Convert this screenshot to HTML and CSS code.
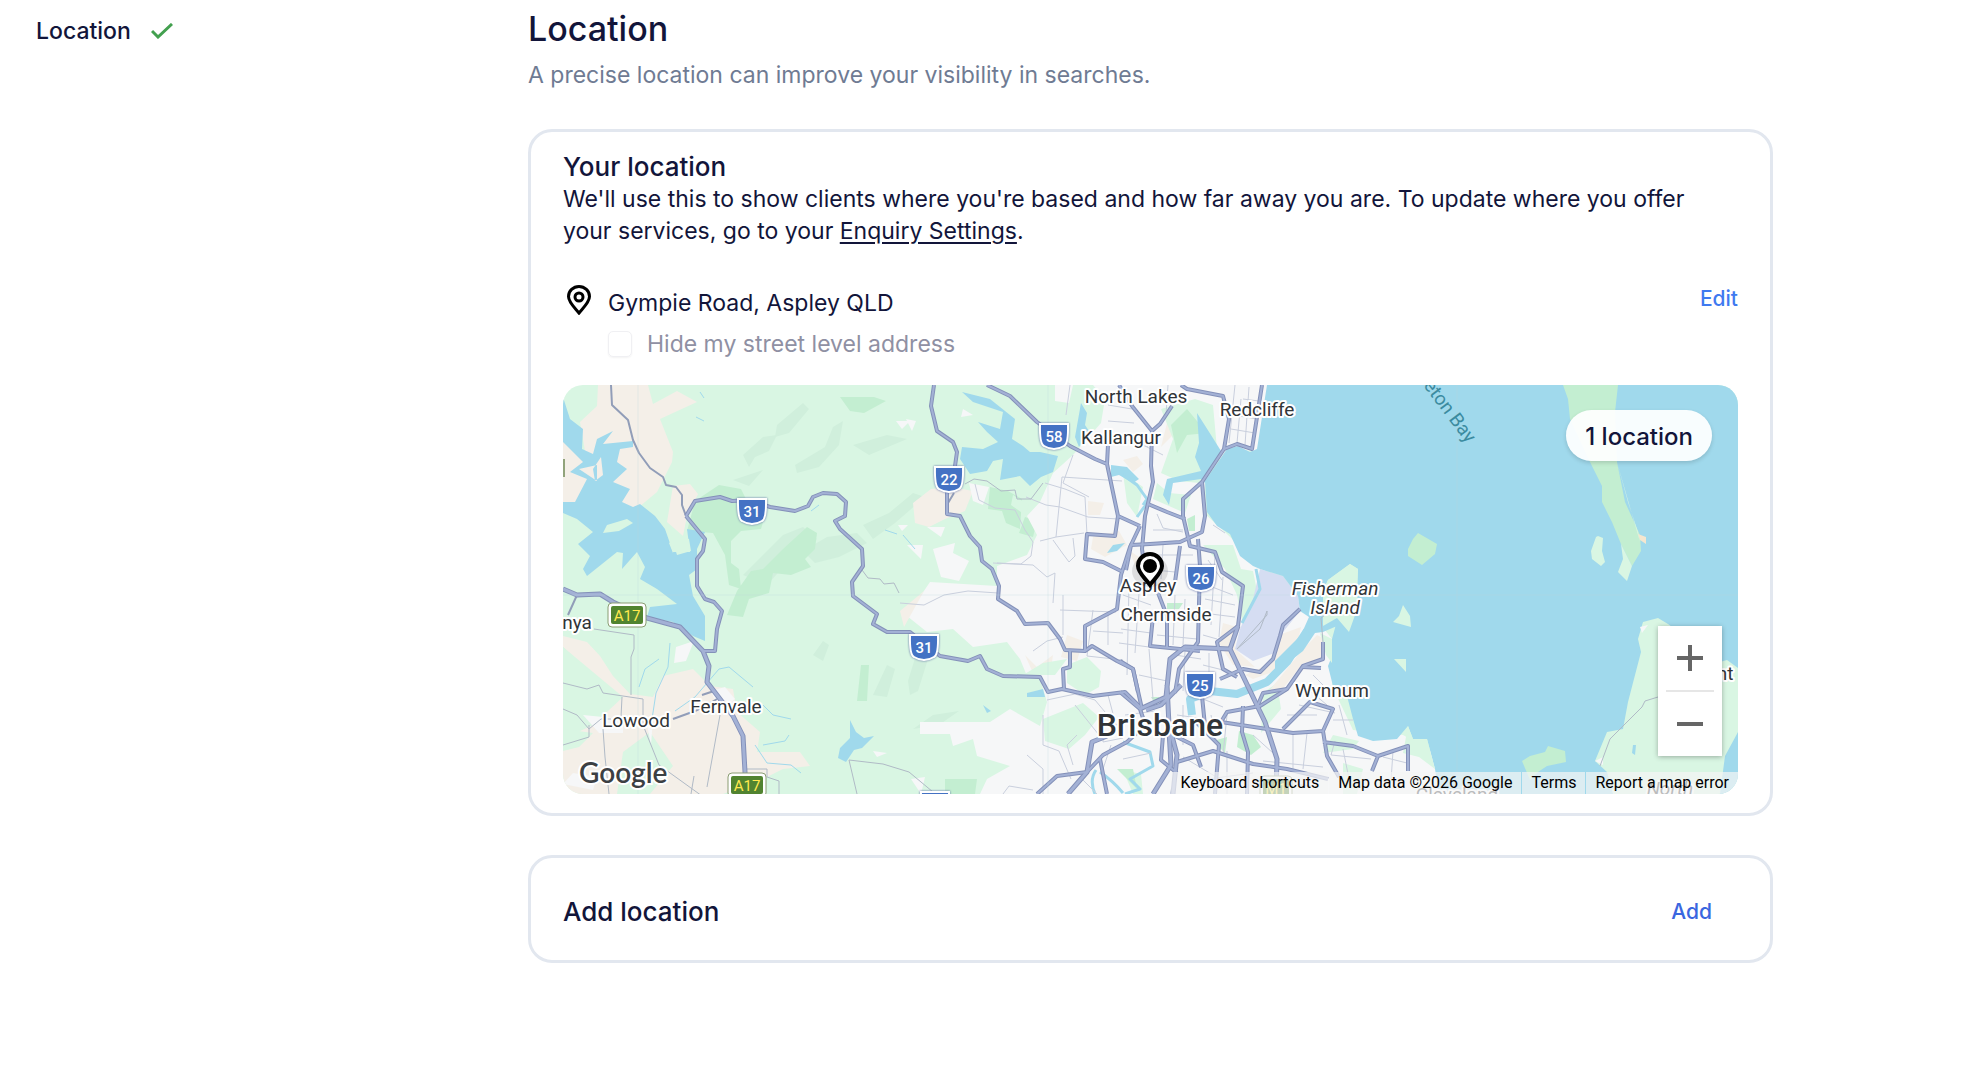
FILE: index.html
```html
<!DOCTYPE html>
<html lang="en">
<head>
    <meta charset="UTF-8">
    <meta name="viewport" content="width=device-width, initial-scale=1.0">
    <title>Location</title>
    <link rel="stylesheet" href="styles.css">
</head>
<body>
    <div class="page">
        <nav class="sidebar">
            <a href="#location" class="step">Location
                <svg class="check" viewBox="0 0 22 16" aria-hidden="true"><path d="M1 8l6 6L21 1"/></svg>
            </a>
        </nav>

        <main class="content" id="location">
            <h1>Location</h1>
            <p class="intro">A precise location can improve your visibility in searches.</p>

            <section class="card">
                <h2>Your location</h2>
                <p class="description">We'll use this to show clients where you're based and how far away you are. To update where you offer your services, go to your <a href="#enquiry">Enquiry Settings</a>.</p>

                <div class="address">
                    <svg class="pin" viewBox="0 0 24 30" aria-hidden="true">
                        <path d="M12 28C9 24 1.500 17.500 1.500 11.500a10.500 10 0 0 1 21 0C22.500 17.500 15 24 12 28z"/>
                        <circle cx="12" cy="12" r="4"/>
                    </svg>
                    <div class="address-text">
                        <p>Gympie Road, Aspley QLD</p>
                        <div class="hide-address">
                            <input type="checkbox" id="hide" disabled>
                            <label for="hide">Hide my street level address</label>
                        </div>
                    </div>
                    <button class="link-button" type="button">Edit</button>
                </div>

                <div class="map">
                    <svg class="map-canvas" viewBox="0 0 1175 409" preserveAspectRatio="xMidYMid slice">
                        <defs>
                            <g id="highways">
                                <path d="M123 131L132 116 157 112 169 116 187 115 207 122 232 126 245 121 250 112 260 108 274 109 283 117 282 131 272 136 277 144 299 164 300 181 289 197 290 211 314 229 310 239 324 247 347 247 377 271 405 276 417 271 424 284 440 291 477 292 485 307 499 304 530 311 562 307 577 322"/>
                                <path d="M123 131L142 154 140 166 134 174 134 201 142 214 151 217 159 226 154 244 152 266 140 266"/>
                                <path d="M371 0L368 21 374 46 390 57 394 67 392 81 384 107 384 129 397 131 407 151 417 162 419 176 429 184 436 201 435 214 454 226 462 239 485 238 497 254 502 265 522 266 529 261 554 276 570 284 575 307"/>
                                <path d="M424 0L447 11 474 37 507 61 532 74 544 79 555 131 577 141M555 131L552 151 524 149 522 174 540 177 560 187M544 79L545 60"/>
                                <path d="M556 0L569 21 589 46 588 81 590 97 582 131 579 164 584 201M609 21L597 39 589 46"/>
                                <path d="M585 119L604 127 622 134M639 97L642 131 639 147 617 157 587 159 568 160 563 185"/>
                                <path d="M618 0L624 4 660 11 666 34 661 64 639 97 620 114 620 131 627 161 652 167 659 187 680 201 675 241 654 257 660 284 674 292"/>
                                <path d="M699 0L689 64 674 59 661 64M635 154L637 181 635 257 616 284 612 308M617 161L612 197"/>
                                <path d="M507 266L507 282 500 284 501 304M522 266L522 241 554 224 558 190 567 162 577 141"/>
                                <path d="M590 231L587 261 637 266M592 200L604 231 604 262"/>
                                <path d="M737 224L720 240 717 251 710 274 697 287 680 284 657 294"/>
                                <path d="M760 257L760 274 740 281 724 304 697 321 664 327 658 337 704 344 730 348 760 346 770 324 747 317 720 344"/>
                                <path d="M760 346L764 371 776 392M760 357L790 361 815 371 845 361 845 386M815 371L809 386"/>
                                <path d="M680 321L679 347 685 367 684 409M614 377L650 366 690 379 724 384 765 394M639 311L642 341"/>
                                <path d="M557 276L570 284 579 324M557 307L577 324 584 345M474 409L494 391 524 387 540 370 564 357 577 345M537 374L544 409M630 334L656 360 652 409"/>
                                <path d="M610 350L630 360 638 382M600 350L598 375 614 388M694 322L700 308 724 304M740 282L758 283"/>
                            </g>
                            <g id="motorways">
                                <path d="M0 204L14 210 37 209 50 217 84 233 117 242 140 266 146 281 144 297 157 314 170 331 180 351 182 387 182 409"/>
                                <path d="M675 241L667 264 622 262 607 274 603 312 577 324M604 300L606 340 614 370 610 409M667 264L702 337 714 374 713 409"/>
                                <path d="M505 409L524 387 529 357 544 351M583 325L598 320 618 300M606 345L608 380 590 409"/>
                            </g>
                            <path id="shield" d="M-14-12H14Q14.500 8 10 10 5 13 0 13T-10 10Q-14.500 8-14-12z"/>
                        </defs>

                        <rect class="park" width="1175" height="409"/>

                        <!-- relief and forest -->
                        <path class="relief" d="M180 70l20-18 14-2-8 16-14 6-6 10zM214 40l26-22 6 6-20 24-14 4zM232 80l30-18 8-20 10-6-4 24-20 22-22 6zM170 95l30-10-14 16zM300 140l26-12 24-20 12 4-30 26-22 16zM290 60l34-10 20 4-38 16zM310 310l14-30 8 4-8 28zM345 296l8-26 12 4-10 32-8 4zM240 166l24-14 30-4 10 10-28 14-24 6z"/>
                        <path class="relief" d="M250 270l10-14 6 4-6 16zM180 190l40-40 20-8 14 12-30 24-20 22zM350 344l20-14 26-4-20 14z"/>
                        <path class="forest" d="M132 116l24-16 22 4 8 16 18 4-6 20-20 2-10 10 0 22 8 6 2 20-12-4-4-30-12-22-26-2zM200 184l20-20 24-22 10 6-2 16-10 10 6 8-20 8-18-2-4 20-20 6-6 18-16-2 10-24 14-20zM277 12l34 0 12 4-22 12-14-2zM427 102l18 4 14 8-2 30-14-6-4-12-14-2zM462 132l12 4-4 16-14-4zM427 214l24-2 6-12 6 14-2 14 26 14-4 6-20-4-8 14-6-2 2-14-10-16-14-6zM497 196l20-4-4 16 30 8 0 12-50-6zM497 196l-6 14 14 8zM382 394l32 0-2 15-30 0zM298 280l8 0-2 36-10 0zM500 352l22-4 0 14-20 6z"/>
                        <path class="sand" d="M35 0L34 21 17 37 22 66 0 56 0 118 12 117 70 127 94 107 109 77 110 67 97 34 134 17 114 6 90 19 85 0zM110 101L127 99 135 109 124 131 120 151 104 137zM350 118l18-14 20-2 22 4-8 20-20 8-16 8-14-4z"/>
                        <path class="sand" d="M0 251L24 257 37 271 50 291 67 309 90 312 100 291 130 284 147 301 170 304 174 327 197 347 194 367 237 367 247 381 220 384 200 394 160 409 0 409 0 354 30 340 60 312 0 262z"/>
                        <path class="park" d="M0 262l26 24 14 22-40 10zM60 367L87 347 110 381 87 409 54 409zM0 344l30 4-14 14-16 4z"/>
                        <path class="urban" d="M113 262l18-6-8 20-12 2zM148 306l14-4 10 12-16 12zM20 330l40 4 0 14-24 0zM10 388l24 4-4 13-30-6zM84 340l6-6-2 26z"/>

                        <!-- built-up area -->
                        <path class="urban" d="M530 0L542 14 538 38 510 70 490 88 477 117 464 131 474 150 464 170 434 181 434 201 367 197 344 231 364 247 390 244 410 262 444 257 457 274 464 291 477 294 484 317 477 341 447 324 427 337 357 337 357 349 387 349 390 361 410 354 414 371 447 381 424 394 417 409 880 409 870 367 840 350 790 345 769 301 769 254 735 211 700 184 664 149 640 127 642 96 664 64 704 67 704 0z"/>
                        <path class="urban" d="M406 98l20 4-6 18-10-4zM343 34l10 2-4 10zM400 24l10 6-12 2zM333 36l14 0-8 8zM370 164l22-6-2 10 16 8-10 20-18-4zM344 160l16 0-2 14zM364 142l18 0-4 10zM310 366l14 2-10 4zM492 0l18 0-4 18-14-2zM348 394l14-2-4 17zM335 140l10 0-6 6z"/>
                        <path class="sand" d="M560 75l14-4 6 8-10 8zM530 152l26-6 8 14-22 12-14-8zM504 250l16 6-6 20-16-4zM462 270l12 12 16-12-2 14-18 4zM566 165l14 10-6 10zM525 116l16 2-4 12-12 0zM606 30l18-12-6 24-20 20zM337 226l24-20-20 36z"/>
                        <path class="park" d="M598 24l34-10 18 6 4 44 4 16-22 18-20-2-18-8 12-34zM594 98l12 10 22 2-6 18-32-14zM504 280l20-8 14 14-2 16-14 8-18-12zM480 334l40-16 16 14-14 18-16 14-24-8zM640 160l30 0 8 24 12 2 4 20-14 34-6-30-12-26zM560 88l20 14-6 30-10-14zM450 110l16 10-4 10-14-10zM460 290l20-12 24-4-12 16zM560 385l18 4 2 20-10 0zM700 308l14-10 4 26-20 24zM770 350l26 6-6 8-30 4zM780 378l20 6-6 25-14 0z"/>
                        <path class="forest" d="M624 134l8-4 0 16-6 0zM676 346l14 4 8 12-10 8-14-8zM650 356l14-4-2 16zM588 312l8 0-2 10zM604 218l16 0-4 6-12 0zM554 384l16 0 4 20zM608 40l16-16 20 24-20 2-10 18z"/>
                        <path class="sand" d="M660 238l14 4-2 22 20 18-22-2-14-22zM716 250l22-8-4 18-16 24-28 10-8-4 26-12zM740 264l14-14 8 4-2 22-20 2-22 28-12 0z"/>
                        <path class="airport" d="M697 184L720 191 735 211 737 226 720 247 714 267 690 276 672 264 677 244 690 214z"/>

                        <!-- water -->
                        <path class="water" d="M704 0L694 64 687 67 675 61 664 64 642 96 644 127 654 141 667 149 677 171 690 181 697 184 720 191 735 211 737 226 746 232 738 250 712 276 712 288 740 266 752 248 760 247 774 241 785 249 794 247 784 228 774 225 769 214 760 206 765 195 787 179 795 184 794 201 790 211 775 232 769 254 769 271 765 281 770 301 784 311 790 334 795 351 810 356 834 354 845 341 850 354 864 354 872 384 876 409 1175 409 1175 0z"/>
                        <path class="water" d="M0 12L7 34 20 44 19 64 30 69 34 54 50 46 40 59 70 56 70 62 57 64 54 77 64 84 50 97 67 104 59 117 70 122 77 119 92 131 102 144 110 167 127 167 124 144 142 147 134 164 134 184 126 190 130 211 142 231 142 256 130 251 110 237 84 232 87 222 114 219 94 204 77 194 82 182 74 167 59 184 60 168 54 167 24 191 20 184 27 171 15 159 30 147 14 134 0 128 0 117 12 117 24 94 7 87 20 77 0 57z"/>
                        <path class="park" d="M44 140l20-6 6 4-14 8-16 2zM108 150l18 4 2 12-14 4zM110 168l-4-10 6-4z"/>
                        <path class="sand" d="M30 84l8-12 2 18-8 6zM34 80l-18 4 18 12z"/>
                        <path class="water" d="M399 62L420 64 435 57 424 47 415 37 437 44 440 27 410 17 399 7 427 14 452 34 449 54 460 61 467 67 477 67 495 71 490 87 478 92 467 101 457 91 437 95 440 74 430 76 424 86 407 89 397 74z"/>
                        <path class="water" d="M277 363l10-10 0-18 6 12 8 6 10-2-12 12-8 2-8 12-8-4zM464 308l16-4 2 8-18 0zM420 320l8 6-4 2zM548 80l16 2 12 12-6 4-14-8-8 2zM550 160l12-2-8 8-10 2zM512 52l6-34 6 10-2 12 4 6-10 16z"/>
                        <path class="water" d="M634 28l14 22 10 16-16 32-4-4-28 4-4 22-6-10 4-16 34-8-6-14 4-14z"/>
                        <path class="river" d="M744 246L724 277 704 297 674 309 647 306 627 314 629 330"/>
                        <path class="creek" d="M560 357L587 367 590 381 567 394 577 404 562 409M533 385Q526 395 532 409M537 387Q550 396 560 408M693 184l4 20-18 34M560 90l14 10 10 14-4 6M584 118l-10 14"/>
                        <path class="stream" d="M76 302l6-18 14-10M107 258l-2 24-12 26-4 26M112 326l20-14 24-28 10-2 24 20M200 320l10 10 18 4M192 360l12 18 24 2 10 8M200 360l22-4 4-6M322 145l12 4M340 150l12 14M137 7l4 6M133 32l8 4M248 126l8-6"/>

                        <!-- islands -->
                        <path class="forest" d="M1000 0L1005 14 1007 34 1027 77 1039 101 1039 117 1049 137 1058 159 1069 181 1078 166 1077 150 1062 117 1054 77 1052 27 1055 0zM855 148L874 159 872 169 859 180 845 171 845 164 850 154zM959 376L967 371 982 367 985 361 1002 366 1003 377 984 381 975 387 967 395z"/>
                        <path class="park" d="M1058 159L1060 174 1055 187 1064 196 1069 181zM1054 77L1077 157 1075 147 1065 117zM1035 151L1040 153 1039 166 1042 177 1038 181 1029 174 1028 166 1033 152zM840 220L847 231 848 242 830 237 836 231zM831 274L843 274 843 287zM760 206l5-11 22-16 8 5-1 27 2 8-10 28-12-14-14 8zM845 341l5 13 14 0 8 30-16-12-16-4zM757 248l12 6 0 24-6-8z"/>
                        <path class="shore" d="M1075 149L1083 152 1083 159 1077 155z"/>
                        <path class="park" d="M1095 233L1080 237 1075 254 1078 267 1065 317 1060 344 1044 347 1032 376 1044 387 1050 409 1157 409 1162 371 1175 347 1175 283 1164 275 1157 277 1105 239z"/>
                        <path class="urban" d="M1032 376l8-4 0 8zM1077 242l8-2-6 8z"/>
                        <path class="water" d="M1070 360l3 0-1 10-3-2z"/>
                        <path class="back-road" d="M1095 312L1082 316 1079 322 1060 341 1047 354 1037 381"/>

                        <!-- local streets -->
                        <path class="street" d="M507 0l-4 30M412 99l4 16 16 8 20 2 10 20 8 12-2 14-10 8-24-1M499 92l-6 60-16 4M499 92l60 4M482 98l20 6 20 8 2 38M510 70l-10 28 26 14M493 152l28-4M490 155l10 14 6 8 6-6-2-18M463 112l20 8 14 2 28 10 30 2M430 178l40 2 14 12 8-4-2 30"/>
                        <path class="street" d="M337 218l24 2 20-10 24-4 30 2M497 225l56 2M500 210l0 40M530 225l-6 46 36 4M470 266l14-10 16-4M530 246l30 2M545 230l0 30M484 315l28-6 20 6 10 12-2 30 20-4M480 330l0 30 16 6 12 28M464 370l16 14 0 25M440 409l6-8 24 4M512 320l24 30M545 310l8 30 20-4"/>
                        <path class="street" d="M545 20l24 4M545 36l26 2M545 48l40 14M600 70l-20-10M605 0l-2 30M672 0l-6 58M680 14l16 2M670 30l24 4M668 44l24 4M678 14l-4 44M686 2l-4 58M590 145l30 0M594 129l6 14 20 4M590 170l40 0M592 185l20 2M600 160l-2 34M650 140l12 8M645 175l14 20M644 200l26 10M642 214l30 6M640 228l32 4M652 170l-4 70M660 192l-4 60"/>
                        <path class="street" d="M560 210l28 10M558 244l30 4M556 258l30 4M566 200l-2 90M576 208l-4 60M594 250l40 4M612 210l-2 50M622 214l-2 46M640 250l14 4M612 270l26 4M622 266l-2 40M646 268l0 40M640 280l24 6M576 290l28 6M586 264l4 50M562 330l30-4M614 330l28 4M620 320l0 40M630 310l30 12M648 330l8 40M664 330l-4 40"/>
                        <path class="street" d="M620 372l50 30M630 396l60-8M664 366l0 43M690 350l20 18M700 376l60 6M730 350l0 34M744 348l-4 36M724 330l30 0M740 300l24 20M750 290l20 20M736 320l36 8M776 320l8 30M770 335l20 0M772 356l-4 14 40 4M820 372l24 6M830 366l-2 30M780 364l8 40M560 374l28-6M548 360l-10 30M510 380l-6-20 10-10M520 395l14 14M690 395l60 6"/>
                        <path class="back-road" d="M31 244l40 6 0 14-3 8 0 38M0 298l24 6 12-4 4 8 40 6 0 26 16 40 50 36 14 5M59 312l-1 20M0 324l14 6 12 14 12-10 10 0M0 360l26-8 0-12M157 330l-13 72M40 344l2 28 4 37M131 391l-3 18M184 384l20 0 0 8 12 4 0 13M286 375l34 4 26 8 24 20M286 375l8 34M760 257l-2-24 16-12M704 226l-7 18-23 20 30-34z"/>
                        <path class="lane" d="M48 0L49 20 65 35 70 55 76 68 87 83 100 92 103 100 113 102 119 110 119 120 123 131M14 210l-9 20M110 334l22-8 12-6 10-6M385 118l6-10M139 310l12-4"/>
                        <path class="back-road" d="M402 99L411 94 424 96 438 106 452 105 454 114 468 114 480 98M299 185l6 8 12 1 4 5 10-1 5 10"/>

                        <use href="#highways" class="road-edge"/>
                        <use href="#motorways" class="road-edge wide"/>
                        <use href="#highways" class="road-fill"/>
                        <use href="#motorways" class="road-fill wide"/>

                        <path class="tile-line" d="M75 0V409M485 0V409M894 0V409M0 210H1175"/>

                        <!-- route shields -->
                        <g class="route" transform="translate(189 126)"><use href="#shield"/><text y="6">31</text></g>
                        <g class="route" transform="translate(386 94)"><use href="#shield"/><text y="6">22</text></g>
                        <g class="route" transform="translate(491 51)"><use href="#shield"/><text y="6">58</text></g>
                        <g class="route" transform="translate(361 262)"><use href="#shield"/><text y="6">31</text></g>
                        <g class="route" transform="translate(638 193)"><use href="#shield"/><text y="6">26</text></g>
                        <g class="route" transform="translate(637 300)"><use href="#shield"/><text y="6">25</text></g>
                        <g class="route" transform="translate(372 419)"><use href="#shield"/></g>
                        <g class="highway" transform="translate(64 230)"><rect class="outer" x="-19" y="-12" width="38" height="24" rx="4"/><rect x="-16" y="-9" width="32" height="18" rx="2"/><text y="6">A17</text></g>
                        <g class="highway" transform="translate(184 400)"><rect class="outer" x="-19" y="-12" width="38" height="24" rx="4"/><rect x="-16" y="-9" width="32" height="18" rx="2"/><text y="6">A17</text></g>
                        <g class="highway" transform="translate(713 403)"><rect class="outer" x="-16" y="-12" width="32" height="24" rx="4"/><rect x="-13" y="-9" width="26" height="18" rx="2"/><text y="6">M1</text></g>
                        <rect class="highway-stub" x="-6" y="74" width="8" height="18"/>

                        <g class="labels">
                            <text x="573" y="18">North Lakes</text>
                            <text x="694" y="31">Redcliffe</text>
                            <text x="558" y="59">Kallangur</text>
                            <text x="585" y="207">Aspley</text>
                            <text x="603" y="236">Chermside</text>
                            <text x="769" y="312">Wynnum</text>
                            <text x="163" y="328">Fernvale</text>
                            <text x="73" y="342">Lowood</text>
                            <text x="14" y="244">nya</text>
                            <text x="1162" y="295">nt</text>
                            <text x="894" y="416">Cleveland</text>
                            <text class="island" x="772" y="210">Fisherman</text>
                            <text class="island" x="772" y="229">Island</text>
                            <text class="island" x="1107" y="410">North</text>
                            <text class="city" x="597" y="351">Brisbane</text>
                        </g>
                        <text class="bay" transform="translate(904 59) rotate(53)">Moreton Bay</text>

                        <ellipse class="marker-shadow" cx="587" cy="186" rx="18" ry="16"/>
                        <path class="marker" d="M587 200C583 194 575 188 575 181a12 12 0 0 1 24 0C599 188 591 194 587 200z"/>
                        <circle cx="587" cy="181" r="7"/>
                    </svg>

                    <div class="count">1 location</div>
                    <div class="google">Google</div>

                    <div class="zoom">
                        <button type="button" aria-label="Zoom in"><svg viewBox="0 0 26 26"><path d="M0 13H26M13 0V26"/></svg></button>
                        <button type="button" aria-label="Zoom out"><svg viewBox="0 0 26 26"><path d="M0 13H26"/></svg></button>
                    </div>

                    <div class="credits">
                        <button type="button">Keyboard shortcuts</button>
                        <span>Map data ©2026 Google</span>
                        <a href="#terms">Terms</a>
                        <a href="#report">Report a map error</a>
                    </div>
                </div>
            </section>

            <section class="card add-card">
                <h2>Add location</h2>
                <button class="link-button add" type="button">Add</button>
            </section>
        </main>
    </div>
</body>
</html>
```
FILE: styles.css
```css
*
{
    box-sizing: border-box;
}
body
{
    margin: 0;
    background-color: #fff;
    color: #12153a;
    font-family: Inter, "Liberation Sans", sans-serif;
    font-size: 23px;
    line-height: 32px;
}
h1, h2, p
{
    margin: 0;
}
button
{
    font-family: inherit;
    border: none;
    background: none;
    padding: 0;
    cursor: pointer;
}
.page
{
    display: grid;
    grid-template-columns: 492px 1fr;
    padding: 8px 189px 64px 36px;
}
.sidebar
{
    padding-top: 7px;
}
.step
{
    display: flex;
    align-items: center;
    gap: 20px;
    color: inherit;
    font-weight: 500;
    text-decoration: none;
}
.check
{
    width: 22px;
    height: 16px;
    fill: none;
    stroke: #43a04f;
    stroke-width: 3;
}
h1
{
    font-size: 34px;
    font-weight: 500;
    line-height: 42px;
}
h2
{
    font-size: 26px;
    font-weight: 500;
    line-height: 32px;
}
.intro
{
    margin: 9px 0 38px;
    color: #6f7b93;
}
.card
{
    border: 3px solid #e2e7ef;
    border-radius: 24px;
    padding: 19px 32px;
}
.description
{
    padding-right: 24px;
}
.description a
{
    color: inherit;
    text-underline-offset: 3px;
}

/* address row */
.address
{
    display: flex;
    align-items: flex-start;
    padding: 36px 0 25px;
}
.pin
{
    width: 24px;
    height: 30px;
    margin: 2px 17px 0 4px;
    fill: none;
    stroke: #000;
    stroke-width: 3;
}
.address-text
{
    flex: 1;
    padding-top: 4px;
}
.hide-address
{
    display: flex;
    align-items: center;
    gap: 15px;
    margin-top: 9px;
    color: #8f90a3;
}
.hide-address input
{
    appearance: none;
    width: 24px;
    height: 26px;
    margin: 0;
    border: 1px solid #f0f0f3;
    border-radius: 5px;
    box-shadow: 0 1px 2px rgba(0, 0, 0, 0.05);
}
.link-button
{
    color: #3f7af0;
    font-size: 21px;
    font-weight: 500;
    line-height: 32px;
}

/* map */
.map
{
    position: relative;
    height: 409px;
    border-radius: 20px;
    overflow: hidden;
    font-family: Roboto, "Liberation Sans", sans-serif;
}
.map-canvas
{
    display: block;
    width: 100%;
    height: 100%;
}
.map-canvas text
{
    text-anchor: middle;
}
.park { fill: #d9f6e3; }
.relief { fill: #d0efdc; }
.forest { fill: #c3eed1; }
.sand { fill: #f4efe8; }
.shore { fill: #f4e6cf; }
.urban { fill: #f6f7f8; }
.airport { fill: #d5ddf2; }
.water { fill: #a0d9ec; }
.river, .creek, .stream, .street, .back-road, .lane, .tile-line
{
    fill: none;
    stroke: #a0d9ec;
    stroke-width: 8;
    stroke-linejoin: round;
}
.creek { stroke-width: 3; }
.stream { stroke-width: 1; }
.street
{
    stroke: #c9cfdd;
    stroke-width: 1;
}
.back-road
{
    stroke: #b0bac6;
    stroke-width: 1;
}
.lane
{
    stroke: #919db8;
    stroke-width: 2;
}
.tile-line
{
    stroke: #b9d8dc;
    stroke-width: 1;
    opacity: 0.3;
}
.road-edge, .road-fill
{
    fill: none;
    stroke: #8491b9;
    stroke-width: 4;
    stroke-linejoin: round;
}
.road-edge.wide { stroke-width: 5; }
.road-fill
{
    stroke: #a3b1d5;
    stroke-width: 2;
}
.road-fill.wide { stroke-width: 3; }
.route use
{
    fill: #4472c4;
    stroke: #fff;
    stroke-width: 2;
    filter: drop-shadow(0 0 1px #5d6ea4);
}
.route text
{
    fill: #fff;
    font-size: 15px;
    font-weight: 500;
}
.highway rect
{
    fill: #518330;
}
.highway .outer
{
    fill: #fff;
    stroke: #8a9c72;
}
.highway text
{
    fill: #ffe94e;
    font-size: 15px;
}
.highway-stub { fill: #91a37b; }
.labels text
{
    fill: #303438;
    stroke: #fff;
    stroke-width: 4;
    stroke-linejoin: round;
    paint-order: stroke;
    font-size: 19px;
}
.labels .island { font-style: italic; }
.labels .city
{
    font-size: 32px;
    font-weight: 500;
}
.map-canvas .bay
{
    fill: #3b8ba0;
    font-size: 19px;
    text-anchor: end;
}
.marker-shadow
{
    fill: #000;
    opacity: 0.1;
}
.marker
{
    fill: #fff;
    stroke: #000;
    stroke-width: 4;
}

/* things lying over the map */
.count
{
    position: absolute;
    top: 25px;
    right: 26px;
    padding: 11px 19px 8px;
    border-radius: 26px;
    background-color: rgba(255, 255, 255, 0.93);
    box-shadow: 0 2px 4px rgba(0, 0, 0, 0.15);
    font-family: Inter, sans-serif;
    font-size: 24px;
    font-weight: 500;
}
.google
{
    position: absolute;
    left: 16px;
    bottom: 6px;
    color: #3c4043;
    font-family: Lato, sans-serif;
    font-size: 28px;
    font-weight: 600;
    -webkit-text-stroke: 4px #fff;
    paint-order: stroke;
}
.zoom
{
    position: absolute;
    right: 16px;
    bottom: 38px;
    width: 64px;
    background-color: #fff;
    box-shadow: 0 1px 5px rgba(0, 0, 0, 0.3);
}
.zoom button
{
    display: flex;
    align-items: center;
    justify-content: center;
    width: 48px;
    height: 64px;
    margin: 0 8px;
}
.zoom button + button
{
    height: 66px;
    border-top: 2px solid #e6e6e6;
}
.zoom svg
{
    width: 26px;
    height: 26px;
    stroke: #666;
    stroke-width: 4;
}
.credits
{
    position: absolute;
    right: 0;
    bottom: 0;
    display: flex;
    gap: 1px;
}
.credits > *
{
    height: 22px;
    padding: 0 9px;
    background-color: rgba(245, 245, 245, 0.7);
    color: #000;
    font-size: 16px;
    line-height: 22px;
    text-decoration: none;
}

.add-card
{
    display: flex;
    align-items: center;
    justify-content: space-between;
    margin-top: 39px;
    padding: 38px 58px 32px 32px;
}
.add
{
    color: #3a66e0;
}
```
